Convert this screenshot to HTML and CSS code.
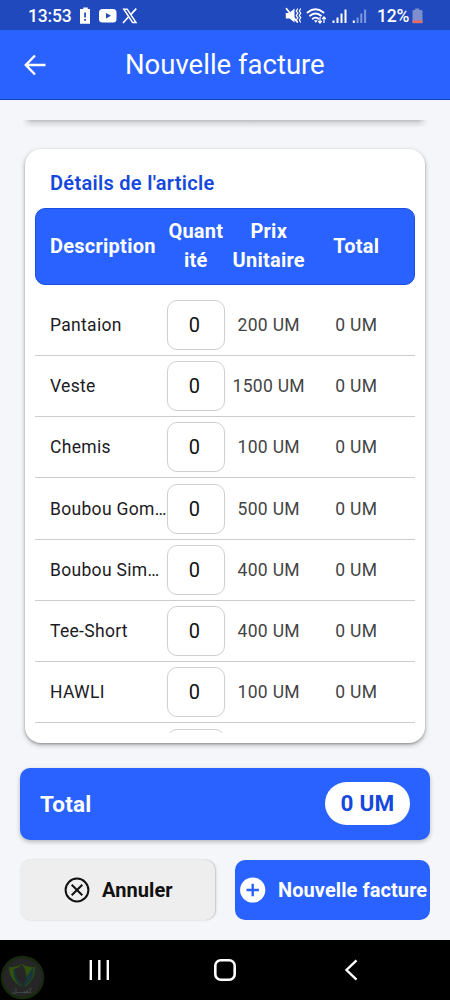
FILE: index.html
```html
<!DOCTYPE html>
<html lang="fr">
<head>
<meta charset="utf-8">
<title>Nouvelle facture</title>
<link rel="stylesheet" href="styles.css">
</head>
<body>
<div class="screen">
  <div class="status">
    <span class="clock">13:53</span>
    <svg class="status-left" width="62" height="20" viewBox="0 0 62 20">
      <path fill="#fff" d="M4.200 1.500h4.600v1.500h2.200v14.800H1V3h3.200z"/>
      <path fill="#1f49bd" d="M5.200 6.500h1.700v5H5.200zM5.200 13h1.700v1.700H5.200z"/>
      <rect x="20" y="3" width="17.500" height="13.500" rx="3.500" fill="#fff"/>
      <path fill="#1f49bd" d="M27 7v5.400l5-2.700z"/>
      <path d="M44.800 3.200h3.400l8.800 13.300h-3.400z" fill="none" stroke="#fff" stroke-width="1.500"/>
      <path d="M57.300 2.700l-5.600 6M49.600 10.800L44 17" stroke="#fff" stroke-width="1.700"/>
    </svg>
    <svg class="status-right" width="84" height="20" viewBox="0 0 84 20">
      <g fill="none" stroke="#fff" stroke-linecap="round">
        <path d="M1.500 2.800l10.500 13" stroke-width="1.800"/>
        <path d="M12.500 3l-1.200 2 1.500 2.200-1.500 2.300 1.500 2.300-1.500 2.200 1.200 2M15.500 3l-1.200 2 1.500 2.200-1.500 2.300 1.500 2.300-1.500 2.200 1.200 2" stroke-width="1.200"/>
        <path d="M22.500 6.500q8-6.500 16 0M25 9.700q5.500-4.500 11 0M27.700 12.700q2.800-2.200 5.600 0" stroke-width="1.800"/>
      </g>
      <path fill="#fff" d="M.8 7h3.400L9.500 2.500v14L4.700 12.500H.8zM29 14.300h3.600L30.800 17z"/>
      <path d="M35 11v6M33.200 15l1.800 2 1.700-2M39 17v-6M37.300 13l1.700-2 1.700 2" fill="none" stroke="#fff" stroke-width="1.200"/>
      <path fill="#fff" d="M47.500 14.500h2V17h-2zM51.500 11.500h2V17h-2zM55.500 7.500h2V17h-2zM59.500 3.500h2V17h-2zM67.800 14.500h2V17h-2z"/>
      <path fill="#7d96dc" d="M71.600 11.500h2V17h-2zM75.300 7.500h2V17h-2zM79.100 3.500h2V17h-2z"/>
    </svg>
    <span class="percent">12%</span>
    <svg class="battery" width="11" height="16" viewBox="0 0 11 16">
      <path fill="#7f8fce" d="M3.200.5h4v1.500h2q1.300 0 1.300 1.300v12H.5v-12Q.5 2 1.800 2h1.400z"/>
      <path fill="#f0695c" d="M.5 12.500h10v1.300q0 1.200-1.200 1.200H1.700Q.5 15 .5 13.800z"/>
    </svg>
  </div>

  <header class="appbar">
    <svg class="back" width="22" height="22" viewBox="0 0 22 22">
      <path d="M21.500 11H2.500M11 1.500L1.800 11l9.200 9.500" fill="none" stroke="#fff" stroke-width="2.400"/>
    </svg>
    <h1 class="title">Nouvelle facture</h1>
  </header>

  <main class="content">
    <div class="prev-edge"></div>

    <section class="card">
      <h2 class="card-title">Détails de l'article</h2>
      <div class="thead cols">
        <span>Description</span>
        <span class="center">Quant<br>ité</span>
        <span class="center">Prix<br>Unitaire</span>
        <span class="center">Total</span>
      </div>
      <div class="rows">
        <div class="row cols"><span class="name">Pantaion</span><span class="qty">0</span><span class="num">200 UM</span><span class="num">0 UM</span></div>
        <div class="row cols"><span class="name">Veste</span><span class="qty">0</span><span class="num">1500 UM</span><span class="num">0 UM</span></div>
        <div class="row cols"><span class="name">Chemis</span><span class="qty">0</span><span class="num">100 UM</span><span class="num">0 UM</span></div>
        <div class="row cols"><span class="name">Boubou Gom…</span><span class="qty">0</span><span class="num">500 UM</span><span class="num">0 UM</span></div>
        <div class="row cols"><span class="name">Boubou Sim…</span><span class="qty">0</span><span class="num">400 UM</span><span class="num">0 UM</span></div>
        <div class="row cols"><span class="name">Tee-Short</span><span class="qty">0</span><span class="num">400 UM</span><span class="num">0 UM</span></div>
        <div class="row cols"><span class="name">HAWLI</span><span class="qty">0</span><span class="num">100 UM</span><span class="num">0 UM</span></div>
        <div class="row cols"><span class="name"></span><span class="qty"></span><span class="num"></span><span class="num"></span></div>
      </div>
    </section>

    <section class="total">
      <span class="total-label">Total</span>
      <span class="pill">0 UM</span>
    </section>

    <div class="actions">
      <div class="btn cancel">
        <svg width="26" height="26" viewBox="0 0 26 26" fill="none" stroke="#111">
          <circle cx="13" cy="13" r="11.400" stroke-width="2"/>
          <path d="M7.700 7.700l10.600 10.600M18.300 7.700L7.700 18.300" stroke-width="2"/>
        </svg>
        <span>Annuler</span>
      </div>
      <div class="btn create">
        <svg width="26" height="26" viewBox="0 0 26 26">
          <circle cx="12.700" cy="13" r="12.600" fill="#fff"/>
          <path d="M12.700 6.800v12.400M6.500 13h12.400" stroke="#2962ff" stroke-width="2.400"/>
        </svg>
        <span>Nouvelle facture</span>
      </div>
    </div>
  </main>

  <nav class="navbar">
    <svg class="brand" width="46" height="46" viewBox="0 0 46 46">
      <circle cx="22.500" cy="23.500" r="20.500" fill="#262626" stroke="#17290f" stroke-width="2.500"/>
      <path d="M22 10q6 4 13 3 1 12-10 20 4-13-3-23" fill="#2f520c"/>
      <path d="M22 10q-6 4-13 3 0 13 13 20-10-9-8-18 5-1 8-5" fill="#2f520c"/>
      <path d="M14 15q2 12 9 17-9-3-9-17zM33 14q-7 8-9 18 10-6 9-18" fill="#17373b" stroke="#17373b"/>
      <text x="22" y="39" class="brand-text">كفيـــل</text>
    </svg>
    <svg class="keys" width="450" height="60" viewBox="0 0 450 60" fill="none" stroke="#fff">
      <path d="M90.800 20v20M99.300 20v20M107.800 20v20" stroke-width="2.400"/>
      <rect x="215.300" y="20.300" width="19.400" height="19.400" rx="5.500" stroke-width="2.600"/>
      <path d="M356.500 20.300L346.500 30l10 9.700" stroke-width="2.400"/>
    </svg>
  </nav>
</div>
</body>
</html>
```

FILE: styles.css
```css
* { box-sizing: border-box; }

body {
  margin: 0;
  font-family: Roboto, "Liberation Sans", sans-serif;
}

svg { display: block; flex: none; }

.screen {
  display: flex;
  flex-direction: column;
  width: 450px;
  height: 1000px;
  overflow: hidden;
  background: #f5f6fa;
}

.status {
  display: flex;
  align-items: center;
  height: 30px;
  padding: 1px 26px 0 28px;
  background: #1f49bd;
  color: #fff;
  font-size: 17.5px;
  font-weight: 500;
}

.clock { width: 44px; letter-spacing: -0.15px; }
.status-left { margin-left: 7px; }
.status-right { margin-left: 144px; }
.percent { margin-left: 8px; width: 33px; letter-spacing: -0.2px; }
.battery { margin-left: 2px; }

.appbar {
  display: flex;
  align-items: center;
  height: 70px;
  padding-left: 24px;
  background: #2962ff;
  border-bottom: 1px solid #1742c8;
}

.title {
  margin: 0 0 0 79px;
  color: #fff;
  font-size: 27.5px;
  font-weight: 400;
}

.content {
  display: flex;
  flex-direction: column;
  height: 840px;
  padding: 0 20px 20px;
}

/* Lower shadow of the card scrolled out above */
.prev-edge {
  height: 8px;
  margin: 20px 2px 21px;
  background:
    linear-gradient(90deg, #f5f6fa, rgba(245, 246, 250, 0) 10px, rgba(245, 246, 250, 0) calc(100% - 10px), #f5f6fa),
    linear-gradient(#bcbdc1, #d9dade 35%, #f5f6fa);
}

.card {
  height: 594px;
  margin: 0 5px;
  padding: 20px 10px 10px;
  border-radius: 16px;
  background: #fff;
  box-shadow: 0 2px 5px rgba(0, 0, 0, 0.3), 0 1px 2px rgba(0, 0, 0, 0.2);
}

.card-title {
  height: 38.500px;
  margin: 0;
  padding: 0 15px;
  color: #1549dc;
  font-size: 20px;
  font-weight: 600;
  line-height: 28px;
  letter-spacing: 0.3px;
}

.cols {
  display: grid;
  grid-template-columns: 116.700px 58.300px 87.500px 87.500px;
  align-items: center;
  padding: 0 15px;
}

.thead {
  height: 77.500px;
  border: 1px solid #1b4ee0;
  border-radius: 10px;
  padding: 0 14px;
  background: #2962ff;
  color: #fff;
  font-size: 20px;
  font-weight: 700;
  line-height: 29px;
  letter-spacing: 0.25px;
}

.center { text-align: center; }

.rows {
  height: 447.500px;
  padding-top: 9.700px;
  overflow: hidden;
}

.row {
  height: 61.250px;
  border-bottom: 1px solid #cdcdcd;
  font-size: 17.5px;
  letter-spacing: 0.31px;
}

.name { color: #1c1b1f; white-space: nowrap; }

.qty {
  display: flex;
  align-items: center;
  justify-content: center;
  height: 50px;
  border: 1px solid #cfcfcf;
  border-radius: 10px;
  color: #111;
  font-size: 20px;
  letter-spacing: 0;
  padding-right: 3px;
}

.num { color: #444; text-align: center; }

.total {
  display: flex;
  align-items: center;
  justify-content: space-between;
  height: 72px;
  margin-top: 25px;
  padding: 0 20px 1px;
  border-radius: 10px;
  background: #2962ff;
  box-shadow: 0 2px 4px rgba(0, 0, 0, 0.25);
  color: #fff;
  font-size: 22.5px;
  font-weight: 700;
}

.total-label { letter-spacing: 0.2px; }

.pill {
  width: 85px;
  height: 43px;
  border-radius: 22px;
  background: #fff;
  color: #1549dc;
  line-height: 43px;
  text-align: center;
  letter-spacing: 0.2px;
}

.actions {
  display: grid;
  grid-template-columns: 195px 195px;
  gap: 20px;
  height: 60px;
  margin-top: 20px;
}

.btn {
  display: flex;
  align-items: center;
  border-radius: 10px;
  font-size: 20px;
  font-weight: 700;
  white-space: nowrap;
  letter-spacing: 0.08px;
}

.cancel {
  gap: 12px;
  padding-left: 44px;
  background: #eee;
  box-shadow: 1px 0 2px rgba(0, 0, 0, 0.22);
  color: #111;
}

.create {
  gap: 12px;
  padding-left: 5px;
  background: #2962ff;
  color: #fff;
}

.navbar {
  position: relative;
  height: 60px;
  background: #000;
}

.brand {
  position: absolute;
  left: 0;
  top: 14px;
}

.brand-text {
  fill: #4a524f;
  font-family: "DejaVu Sans", sans-serif;
  font-size: 7px;
  text-anchor: middle;
}
```
